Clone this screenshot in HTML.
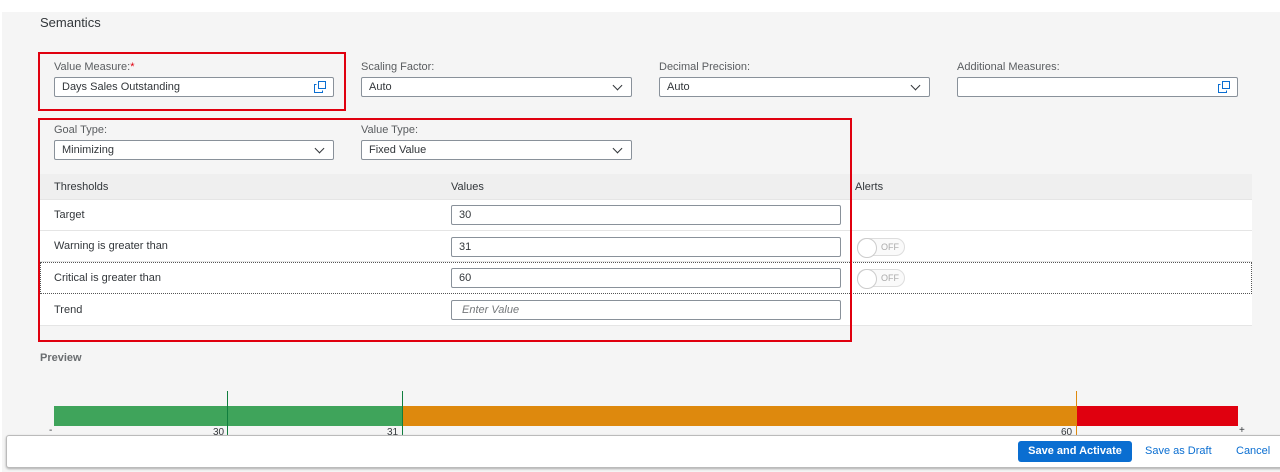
<!DOCTYPE html>
<html><head><style>
*{box-sizing:border-box;margin:0;padding:0}
body{width:1280px;height:472px;background:#fff;font-family:"Liberation Sans",sans-serif;font-size:11px;color:#32363a;position:relative;overflow:hidden}
.bg{position:absolute;left:2px;top:12px;width:1278px;height:460px;background:#f5f5f5}
.a{position:absolute}
.lbl{position:absolute;font-size:11px;color:#5a5d60}
.inp{position:absolute;height:20px;background:#fff;border:1px solid #89919a;border-radius:2px;padding-left:7px;line-height:19px;font-size:11px;color:#32363a}
.dd::after{content:"";position:absolute;right:10px;top:4px;width:6px;height:6px;border-right:1px solid #32363a;border-bottom:1px solid #32363a;transform:rotate(45deg)}
.red{position:absolute;border:2px solid #e0000f}
.row{position:absolute;left:40px;width:1212px;background:#fff;border-bottom:1px solid #e5e5e5}
.tog{position:absolute;width:48px;height:18px;border:1px solid #ddd;border-radius:9px;background:#fafafa}
.tog::before{content:"";position:absolute;left:-1px;top:-1px;width:18px;height:18px;border-radius:50%;background:#fff;border:1px solid #ccc}
.tog span{position:absolute;left:23px;top:3px;font-size:9px;color:#aaa}
</style></head><body>
<div class="bg"></div>
<div class="a" style="left:40px;top:15px;font-size:13px;color:#32363a">Semantics</div>

<div class="lbl" style="left:54px;top:61px">Value Measure:<span style="color:#e0000f">*</span></div>
<div class="inp" style="left:54px;top:77px;width:280px">Days Sales Outstanding<svg class="a" style="right:7px;top:3px" width="12" height="12" viewBox="0 0 12 12" fill="none" stroke="#0a6ed1"><rect x="4.5" y="0.5" width="7" height="7"/><path d="M2.5 3.5H0.5V11.5H8.5V9.5"/></svg></div>
<div class="lbl" style="left:361px;top:61px">Scaling Factor:</div>
<div class="inp dd" style="left:361px;top:77px;width:271px">Auto</div>
<div class="lbl" style="left:659px;top:61px">Decimal Precision:</div>
<div class="inp dd" style="left:659px;top:77px;width:271px">Auto</div>
<div class="lbl" style="left:957px;top:61px">Additional Measures:</div>
<div class="inp" style="left:957px;top:77px;width:281px"><svg class="a" style="right:7px;top:3px" width="12" height="12" viewBox="0 0 12 12" fill="none" stroke="#0a6ed1"><rect x="4.5" y="0.5" width="7" height="7"/><path d="M2.5 3.5H0.5V11.5H8.5V9.5"/></svg></div>

<div class="lbl" style="left:54px;top:124px">Goal Type:</div>
<div class="inp dd" style="left:54px;top:140px;width:280px">Minimizing</div>
<div class="lbl" style="left:361px;top:124px">Value Type:</div>
<div class="inp dd" style="left:361px;top:140px;width:271px">Fixed Value</div>

<div class="a" style="left:40px;top:174px;width:1212px;height:26px;background:#efefef;border-bottom:1px solid #e5e5e5"></div>
<div class="a" style="left:54px;top:181px">Thresholds</div>
<div class="a" style="left:451px;top:181px">Values</div>
<div class="a" style="left:855px;top:181px">Alerts</div>

<div class="row" style="top:200px;height:31px"></div>
<div class="row" style="top:231px;height:31px"></div>
<div class="row" style="top:262px;height:32px;border:1px dotted #555"></div>
<div class="row" style="top:294px;height:32px"></div>
<div class="a" style="left:54px;top:209px">Target</div>
<div class="a" style="left:54px;top:240px">Warning is greater than</div>
<div class="a" style="left:54px;top:272px">Critical is greater than</div>
<div class="a" style="left:54px;top:304px">Trend</div>
<div class="inp" style="left:451px;top:205px;width:390px">30</div>
<div class="inp" style="left:451px;top:237px;width:390px">31</div>
<div class="inp" style="left:451px;top:268px;width:390px">60</div>
<div class="inp" style="left:451px;top:300px;width:390px;color:#74777a;font-style:italic;padding-left:10px">Enter Value</div>
<div class="tog" style="left:857px;top:238px"><span>OFF</span></div>
<div class="tog" style="left:857px;top:269px"><span>OFF</span></div>

<div class="red" style="left:38px;top:52px;width:308px;height:59px"></div>
<div class="red" style="left:38px;top:118px;width:814px;height:224px"></div>

<div class="a" style="left:40px;top:352px;font-weight:bold;color:#6a6d70">Preview</div>
<div class="a" style="left:54px;top:406px;width:348px;height:20px;background:#3fa45b"></div>
<div class="a" style="left:402px;top:406px;width:674px;height:20px;background:#de890d"></div>
<div class="a" style="left:1076px;top:406px;width:162px;height:20px;background:#e0000f"></div>
<div class="a" style="left:227px;top:391px;width:1px;height:44px;background:#107e3e"></div>
<div class="a" style="left:402px;top:391px;width:1px;height:44px;background:#107e3e"></div>
<div class="a" style="left:1076px;top:391px;width:1px;height:44px;background:#de890d"></div>
<div class="a" style="left:213px;top:427px;font-size:10px">30</div>
<div class="a" style="left:387px;top:427px;font-size:10px">31</div>
<div class="a" style="left:1061px;top:427px;font-size:10px">60</div>
<div class="a" style="left:49px;top:425px;font-size:10px">-</div>
<div class="a" style="left:1239px;top:425px;font-size:10px">+</div>

<div class="a" style="left:6px;top:435px;width:1280px;height:33px;background:#fff;border:1px solid #bbb;border-radius:3px;box-shadow:0 1px 2px #aaa"></div>
<div class="a" style="left:1018px;top:441px;width:114px;height:21px;background:#0a6ed1;border-radius:3px;color:#fff;font-weight:bold;text-align:center;line-height:21px">Save and Activate</div>
<div class="a" style="left:1145px;top:445px;color:#0a6ed1">Save as Draft</div>
<div class="a" style="left:1236px;top:445px;color:#0a6ed1">Cancel</div>
</body></html>
